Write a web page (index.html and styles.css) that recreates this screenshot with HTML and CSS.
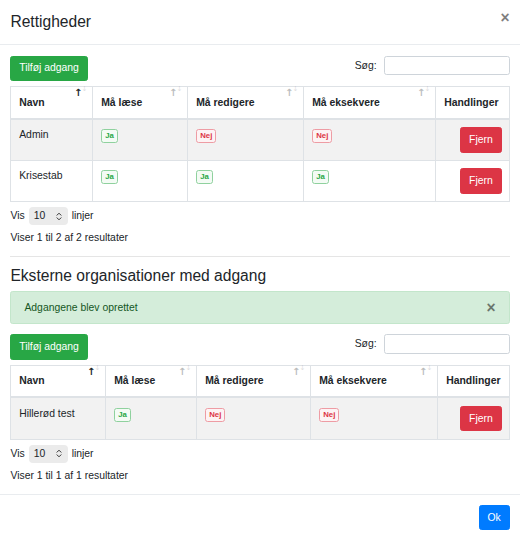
FILE: index.html
```html
<!DOCTYPE html>
<html lang="da">
<head>
    <meta charset="UTF-8">
    <meta name="viewport" content="width=device-width, initial-scale=1.0">
    <title>Rettigheder</title>
    <link rel="stylesheet" href="styles.css">
</head>
<body>
    <div class="modal">
        <div class="modal-header">
            <h4 class="modal-title">Rettigheder</h4>
            <button class="close" type="button">&times;</button>
        </div>

        <div class="modal-body">
            <div class="dt-top">
                <button class="btn btn-success" type="button">Tilføj adgang</button>
                <label class="search">Søg:<input type="search"></label>
            </div>

            <table class="dt users">
                <colgroup>
                    <col class="c1"><col class="c2"><col class="c3"><col class="c4"><col class="c5">
                </colgroup>
                <thead>
                    <tr>
                        <th class="sorting sorting-asc">Navn</th>
                        <th class="sorting">Må læse</th>
                        <th class="sorting">Må redigere</th>
                        <th class="sorting">Må eksekvere</th>
                        <th>Handlinger</th>
                    </tr>
                </thead>
                <tbody>
                    <tr class="odd">
                        <td>Admin</td>
                        <td><span class="badge yes">Ja</span></td>
                        <td><span class="badge no">Nej</span></td>
                        <td><span class="badge no">Nej</span></td>
                        <td class="actions"><button class="btn btn-danger" type="button">Fjern</button></td>
                    </tr>
                    <tr>
                        <td>Krisestab</td>
                        <td><span class="badge yes">Ja</span></td>
                        <td><span class="badge yes">Ja</span></td>
                        <td><span class="badge yes">Ja</span></td>
                        <td class="actions"><button class="btn btn-danger" type="button">Fjern</button></td>
                    </tr>
                </tbody>
            </table>

            <div class="dt-length">
                Vis
                <span class="length-select">10
                    <svg width="6" height="9" viewBox="0 0 6 9"><path d="M1 3.2 3 1.2 5 3.2M1 5.8 3 7.8 5 5.8" fill="none" stroke="#333" stroke-width="1" stroke-linecap="round" stroke-linejoin="round"/></svg>
                </span>
                linjer
            </div>
            <div class="dt-info">Viser 1 til 2 af 2 resultater</div>

            <hr>

            <h4 class="section-title">Eksterne organisationer med adgang</h4>

            <div class="alert">
                Adgangene blev oprettet
                <button class="close" type="button">&times;</button>
            </div>

            <div class="dt-top">
                <button class="btn btn-success" type="button">Tilføj adgang</button>
                <label class="search">Søg:<input type="search"></label>
            </div>

            <table class="dt orgs">
                <colgroup>
                    <col class="c1"><col class="c2"><col class="c3"><col class="c4"><col class="c5">
                </colgroup>
                <thead>
                    <tr>
                        <th class="sorting sorting-asc">Navn</th>
                        <th class="sorting">Må læse</th>
                        <th class="sorting">Må redigere</th>
                        <th class="sorting">Må eksekvere</th>
                        <th>Handlinger</th>
                    </tr>
                </thead>
                <tbody>
                    <tr class="odd">
                        <td>Hillerød test</td>
                        <td><span class="badge yes">Ja</span></td>
                        <td><span class="badge no">Nej</span></td>
                        <td><span class="badge no">Nej</span></td>
                        <td class="actions"><button class="btn btn-danger" type="button">Fjern</button></td>
                    </tr>
                </tbody>
            </table>

            <div class="dt-length">
                Vis
                <span class="length-select">10
                    <svg width="6" height="9" viewBox="0 0 6 9"><path d="M1 3.2 3 1.2 5 3.2M1 5.8 3 7.8 5 5.8" fill="none" stroke="#333" stroke-width="1" stroke-linecap="round" stroke-linejoin="round"/></svg>
                </span>
                linjer
            </div>
            <div class="dt-info">Viser 1 til 1 af 1 resultater</div>
        </div>

        <div class="modal-footer">
            <button class="btn btn-primary" type="button">Ok</button>
        </div>
    </div>
</body>
</html>
```

FILE: styles.css
```css
body {
    margin: 0;
    background-color: #fff;
    color: #212529;
    font-family: "Liberation Sans", Arial, sans-serif;
    font-size: 10.4px;
    line-height: 1.5;
}
.modal {
    width: 520px;
}
.modal-header {
    display: flex;
    align-items: flex-start;
    padding: 10.4px;
    border-bottom: 1px solid #e9ecef;
}
.modal-title {
    margin: 0;
    font-size: 15.6px;
    font-weight: normal;
    line-height: 1.5;
}
.close {
    margin: -10.4px -10.4px -10.4px auto;
    padding: 10.4px;
    border: 0;
    background: transparent;
    color: #000;
    font-family: inherit;
    font-size: 15.6px;
    font-weight: bold;
    line-height: 1;
    opacity: .5;
    cursor: pointer;
}
.modal-body {
    padding: 10.4px;
}
.modal-footer {
    display: flex;
    justify-content: flex-end;
    padding: 10.4px;
    border-top: 1px solid #e9ecef;
}
.btn {
    padding: 3.9px 7.8px;
    border: 1px solid transparent;
    border-radius: 2.6px;
    color: #fff;
    font-family: inherit;
    font-size: 10.4px;
    line-height: 1.5;
    cursor: pointer;
}
.btn-success {
    background-color: #28a745;
    border-color: #28a745;
}
.btn-danger {
    background-color: #dc3545;
    border-color: #dc3545;
}
.btn-primary {
    background-color: #007bff;
    border-color: #007bff;
}
.dt-top {
    display: flex;
    justify-content: space-between;
    align-items: flex-start;
}
.search {
    display: flex;
    align-items: center;
    gap: 7px;
}
.search input {
    box-sizing: border-box;
    width: 126px;
    height: 19.5px;
    padding: 0 5px;
    border: 1px solid #ced4da;
    border-radius: 2.6px;
    font-family: inherit;
    font-size: 10.4px;
}
.dt {
    width: 100%;
    margin-top: 5px;
    border-collapse: collapse;
    table-layout: fixed;
}
.dt th,
.dt td {
    padding: 7.4px 7.8px;
    border: 1px solid #dee2e6;
    text-align: left;
    vertical-align: top;
}
.dt thead th {
    position: relative;
    padding-top: 7.6px;
    padding-bottom: 7.6px;
    vertical-align: bottom;
    border-bottom-width: 2px;
    font-weight: bold;
    white-space: nowrap;
}
.dt thead th.sorting {
    padding-right: 19.5px;
}
.dt thead th.sorting::before,
.dt thead th.sorting::after {
    position: absolute;
    font-family: "DejaVu Sans", sans-serif;
    line-height: 1;
    opacity: .3;
}
.dt thead th.sorting::before {
    content: "\2191";
    top: 1px;
    right: 10px;
    font-size: 10px;
}
.dt thead th.sorting::after {
    content: "\2193";
    top: -1px;
    right: 5px;
    font-size: 7px;
    font-weight: normal;
    opacity: .15;
}
.dt thead th.sorting-asc::before {
    opacity: 1;
}
.dt tbody tr.odd td {
    background-color: #f2f2f2;
}
.dt td.actions {
    text-align: right;
}
.users .c1 { width: 82px; }
.users .c2 { width: 95px; }
.users .c3 { width: 116px; }
.users .c4 { width: 132px; }
.users .c5 { width: 74px; }
.orgs .c1 { width: 95px; }
.orgs .c2 { width: 91px; }
.orgs .c3 { width: 114px; }
.orgs .c4 { width: 127px; }
.orgs .c5 { width: 72px; }
.badge {
    display: inline-block;
    padding: 2px 3px;
    border: 1px solid;
    border-radius: 2.6px;
    font-size: 7.8px;
    font-weight: bold;
    line-height: 1;
}
.badge.yes {
    color: #28a745;
    border-color: #8fd19e;
    background-color: #f4fbf5;
}
.badge.no {
    color: #dc3545;
    border-color: #ee9ca4;
    background-color: #fdf3f4;
}
.dt-length {
    display: flex;
    align-items: center;
    gap: 4px;
    margin-top: 5px;
}
.length-select {
    box-sizing: border-box;
    display: inline-flex;
    align-items: center;
    justify-content: space-between;
    width: 39px;
    height: 18px;
    padding: 0 6px 0 5px;
    border-radius: 4px;
    background-color: #ebebeb;
}
.dt-info {
    margin-top: 5px;
}
hr {
    margin: 10.4px 0;
    border: 0;
    border-top: 1px solid rgba(0, 0, 0, .1);
}
.section-title {
    margin: 0 0 5.2px;
    font-size: 15.6px;
    font-weight: normal;
    line-height: 1.2;
}
.alert {
    position: relative;
    margin-bottom: 10.4px;
    padding: 7.4px 13px;
    border: 1px solid #c3e6cb;
    border-radius: 2.6px;
    background-color: #d4edda;
    color: #155724;
}
.alert .close {
    position: absolute;
    top: 0;
    right: 0;
    margin: 0;
    padding: 7.4px 13px;
    color: #000;
}
```
